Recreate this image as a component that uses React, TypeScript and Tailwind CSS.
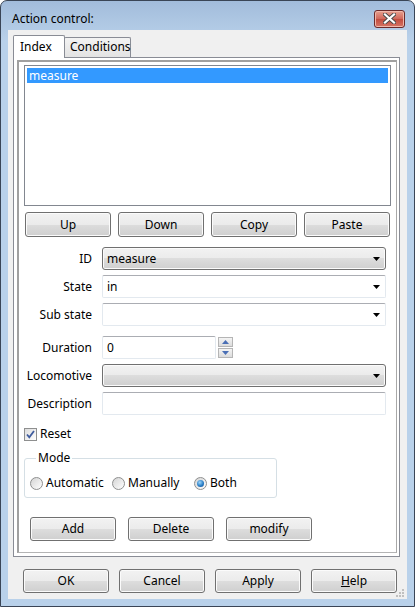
import React from 'react';

const btnCls =
  'w-[86px] rounded-[3px] border border-[#707070] bg-[linear-gradient(#f2f2f2_0%,#ebebeb_50%,#dddddd_50%,#cfcfcf_100%)] shadow-[inset_0_0_0_1px_#fbfbfb] text-[12px] leading-[16px] text-black flex items-center justify-center';

const Btn = ({ children, h = 'h-[25px]' }: { children: React.ReactNode; h?: string }) => (
  <div className={`${btnCls} ${h}`}>{children}</div>
);

const Arrow = () => (
  <svg width="7" height="4" viewBox="0 0 7 4" className="shrink-0">
    <path d="M0 0h7L3.5 4z" fill="#000" />
  </svg>
);

const Combo = ({ value, readonly }: { value?: string; readonly?: boolean }) => (
  <div
    className={
      readonly
        ? 'w-[284px] h-[23px] rounded-[3px] border border-[#707070] bg-[linear-gradient(#f2f2f2_0%,#ebebeb_50%,#dddddd_50%,#cfcfcf_100%)] shadow-[inset_0_0_0_1px_#fbfbfb] flex items-center pl-[4px] pr-[5px]'
        : 'w-[284px] h-[23px] rounded-[2px] border border-[#e3e9ef] border-t-[#abadb3] bg-white flex items-center pl-[4px] pr-[5px]'
    }
  >
    <span className="flex-1 text-[12px] leading-[16px]">{value}</span>
    <Arrow />
  </div>
);

const Row = ({ label, children, className = '' }: { label: string; children: React.ReactNode; className?: string }) => (
  <div className={`flex items-center ${className}`}>
    <div className="w-[68px] text-right text-[12px] leading-[16px]">{label}</div>
    <div className="ml-[10px]">{children}</div>
  </div>
);

const Radio = ({ label, checked }: { label: string; checked?: boolean }) => (
  <div className="w-[82px] flex items-center">
    <div className="w-[13px] h-[13px] rounded-full border border-[#8e8f8f] bg-[linear-gradient(135deg,#d4d4d4,#ffffff)] flex items-center justify-center">
      {checked && (
        <div className="w-[7px] h-[7px] rounded-full bg-[radial-gradient(circle_at_40%_35%,#9fd6fa_0%,#2a7fc7_55%,#10468a_100%)]" />
      )}
    </div>
    <span className="ml-[3px] text-[12px] leading-[16px]">{label}</span>
  </div>
);

export default function App() {
  return (
    <div className="w-[415px] h-[607px] border border-[#3a4556] rounded-t-[7px] bg-[linear-gradient(#a2bcdb,#b9d1ea_40px,#b9d1ea)] flex flex-col font-['Noto_Sans',sans-serif] text-black">
      {/* title bar */}
      <div className="h-[29px] pt-[6px] pl-[11px] pr-[9px] flex items-center justify-between">
        <span className="text-[12px] leading-[16px] text-black">Action control:</span>
        <div className="w-[31px] h-[18px] rounded-[3px] border border-[#6b2a2a] bg-[linear-gradient(#e7a08f,#d0665a_50%,#c24c3e_51%,#d67565)] shadow-[inset_0_0_0_1px_#f0b7aa] flex items-center justify-center">
          <svg width="13" height="11" viewBox="0 0 13 11">
            <path d="M2 1.5l9 8M11 1.5l-9 8" stroke="#4a4a4a" strokeWidth="4" strokeLinecap="square" />
            <path d="M2 1.5l9 8M11 1.5l-9 8" stroke="#ffffff" strokeWidth="2.2" strokeLinecap="square" />
          </svg>
        </div>
      </div>

      {/* client */}
      <div className="relative mx-[7px] h-[569px] bg-[#f0f0f0] flex flex-col pt-[5px] pl-[5px]">
        {/* tabs */}
        <div className="h-[22px] flex items-end">
          <div className="relative z-10 w-[52px] h-[23px] -mb-px bg-white border border-b-0 border-[#898c95] rounded-t-[2px] pl-[6px] pt-[3px] text-[12px] leading-[16px]">
            Index
          </div>
          <div className="w-[67px] h-[20px] -ml-px bg-[linear-gradient(#f3f3f3,#e3e3e3)] border border-b-0 border-[#898c95] rounded-t-[2px] pl-[5px] pt-[1px] text-[12px] leading-[16px]">
            Conditions
          </div>
        </div>

        {/* panel */}
        <div className="w-[387px] h-[500px] border border-[#898c95] bg-white pt-[2px] pl-[3px] pr-[2px] pb-[3px] flex">
          <div className="flex-1 border-t-2 border-l-2 border-r border-b border-[#a0a0a0] border-b-[#b4b4b4] border-r-[#a8a8a8] flex flex-col pl-[5px] pt-[3px]">
            {/* list */}
            <div className="w-[367px] h-[141px] border border-[#828790] bg-white p-[2px]">
              <div className="h-[15px] bg-[#3399ff] text-white text-[12px] leading-[15px] pl-[2px]">measure</div>
            </div>

            <div className="mt-[6px] ml-px flex gap-[7px]">
              <Btn>Up</Btn>
              <Btn>Down</Btn>
              <Btn>Copy</Btn>
              <Btn>Paste</Btn>
            </div>

            <Row label="ID" className="mt-[10px]">
              <Combo value="measure" readonly />
            </Row>
            <Row label="State" className="mt-[5px]">
              <Combo value="in" />
            </Row>
            <Row label="Sub state" className="mt-[5px]">
              <Combo />
            </Row>
            <Row label="Duration" className="mt-[10px]">
              <div className="flex items-center">
                <div className="w-[114px] h-[23px] rounded-[2px] border border-[#e3e9ef] border-t-[#abadb3] bg-white pl-[4px] flex items-center text-[12px] leading-[16px]">
                  0
                </div>
                <div className="ml-[2px] flex flex-col gap-px">
                  <div className="w-[15px] h-[10px] border border-[#b5b5b5] bg-[linear-gradient(#f4f4f4,#dcdcdc)] flex items-center justify-center">
                    <svg width="7" height="4" viewBox="0 0 7 4">
                      <path d="M3.5 0L7 4H0z" fill="#4a6fb5" />
                    </svg>
                  </div>
                  <div className="w-[15px] h-[10px] border border-[#b5b5b5] bg-[linear-gradient(#f4f4f4,#dcdcdc)] flex items-center justify-center">
                    <svg width="7" height="4" viewBox="0 0 7 4">
                      <path d="M0 0h7L3.5 4z" fill="#4a6fb5" />
                    </svg>
                  </div>
                </div>
              </div>
            </Row>
            <Row label="Locomotive" className="mt-[5px]">
              <Combo readonly />
            </Row>
            <Row label="Description" className="mt-[5px]">
              <div className="w-[284px] h-[23px] rounded-[2px] border border-[#e3e9ef] border-t-[#abadb3] bg-white" />
            </Row>

            {/* reset */}
            <div className="mt-[11px] flex items-center">
              <div className="w-[13px] h-[13px] border border-[#8e8f8f] bg-[linear-gradient(135deg,#dcdcdc,#ffffff)] flex items-center justify-center">
                <svg width="9" height="9" viewBox="0 0 9 9">
                  <path d="M1 4.5l2.3 2.8L8 1" fill="none" stroke="#3f5c9e" strokeWidth="1.8" />
                </svg>
              </div>
              <span className="ml-[3px] text-[12px] leading-[16px]">Reset</span>
            </div>

            {/* mode */}
            <fieldset className="mt-[8px] w-[252px] border border-[#d5dfe5] rounded-[3px] pl-[5px] pb-[6px]">
              <legend className="ml-[6px] px-[2px] text-[12px] leading-[16px]">Mode</legend>
              <div className="mt-[9px] flex items-center">
                <Radio label="Automatic" />
                <Radio label="Manually" />
                <Radio label="Both" checked />
              </div>
            </fieldset>

            <div className="mt-[19px] ml-[6px] flex gap-[12px]">
              <Btn h="h-[24px]">Add</Btn>
              <Btn h="h-[24px]">Delete</Btn>
              <Btn h="h-[24px]">modify</Btn>
            </div>
          </div>
        </div>

        {/* bottom buttons */}
        <div className="mt-[12px] ml-[10px] flex gap-[10px]">
          <Btn h="h-[24px]">OK</Btn>
          <Btn h="h-[24px]">Cancel</Btn>
          <Btn h="h-[24px]">Apply</Btn>
          <Btn h="h-[24px]">
            <span className="underline">H</span>elp
          </Btn>
        </div>

        {/* size grip */}
        <svg width="8" height="8" viewBox="0 0 8 8" className="absolute right-[3px] bottom-[2px]">
          <rect x="6" y="0" width="2" height="2" fill="#c0c0c0" />
          <rect x="3" y="3" width="2" height="2" fill="#c0c0c0" />
          <rect x="6" y="3" width="2" height="2" fill="#c0c0c0" />
          <rect x="0" y="6" width="2" height="2" fill="#c0c0c0" />
          <rect x="3" y="6" width="2" height="2" fill="#c0c0c0" />
          <rect x="6" y="6" width="2" height="2" fill="#c0c0c0" />
        </svg>
      </div>
    </div>
  );
}
